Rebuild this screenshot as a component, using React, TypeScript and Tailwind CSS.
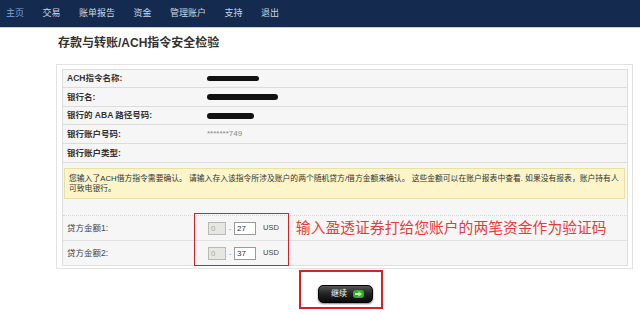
import React from "react";

const FONT = "font-['Liberation_Sans','Noto_Sans_CJK_SC',sans-serif]";

function Bar({ w, h = 4 }: { w: number; h?: number }) {
  return <div className="rounded-full bg-[#111]" style={{ width: w, height: h }} />;
}

export default function App() {
  const nav = ["主页", "交易", "账单报告", "资金", "管理账户", "支持", "退出"];
  return (
    <div className={`w-[640px] h-[315px] bg-white overflow-hidden ${FONT}`}>
      <div className="h-[28px] bg-[#142a4f] border-b border-[#c5d0de] flex items-center pl-[6px] gap-[18.5px] text-[9px]">
        {nav.map((n, i) => (
          <span key={n} className={i === 0 ? "text-[#7ea3d6]" : "text-[#cfd4dd]"}>
            {n}
          </span>
        ))}
      </div>
      <div className="pl-[56px] pr-[7px]">
        <div className="pt-[7px] pl-[2px] h-[36px] text-[12px] leading-[16px] font-bold text-[#333]">
          存款与转账/ACH指令安全检验
        </div>
        <div className="border border-[#e2e2e2] pt-[4px] pb-[2px] pl-[5px] pr-[4px]">
          <div className="border border-[#dedede] bg-[#f6f6f6]">
            {[
              { label: "ACH指令名称:", h: "h-[18px]", v: <Bar w={52} h={5} /> },
              { label: "银行名:", h: "h-[19px]", v: <Bar w={71} h={6} /> },
              { label: "银行的 ABA 路径号码:", h: "h-[18px]", v: <Bar w={47} h={6} /> },
              {
                label: "银行账户号码:",
                h: "h-[19px]",
                v: <span className="text-[8px] text-[#888]">*******749</span>,
              },
              { label: "银行账户类型:", h: "h-[19px]", v: null },
            ].map((r) => (
              <div key={r.label} className={`${r.h} border-b border-[#dcdcdc] flex items-center`}>
                <div className="w-[144px] pl-[4px] text-[8.5px] font-bold text-[#333]">{r.label}</div>
                <div className="flex items-center">{r.v}</div>
              </div>
            ))}
            <div className="h-[53px] border-b border-dotted border-[#d6d6d6] pt-[5px] pl-[1px] pr-[2px]">
              <div className="h-[31px] bg-[#fbf5c9] border border-[#e9e0a8] pl-[4px] pt-[5px] text-[7.8px] leading-[10px] text-[#333] whitespace-nowrap overflow-hidden">
                您输入了ACH借方指令需要确认。 请输入存入该指令所涉及账户的两个随机贷方/借方金额来确认。 这些金额可以在账户报表中查看. 如果没有报表，账户持有人
                <br />
                可致电银行。
              </div>
            </div>
            <div className="relative">
              <div className="h-[25px] border-b border-[#e2e2e2] flex items-center">
                <div className="w-[145px] pl-[4px] text-[8.5px] text-[#444]">贷方金额1:</div>
                <Inputs a="0" b="27" />
                <span className="ml-[17px] text-[14.8px] leading-[16px] text-[#e43d3a]">
                  输入盈透证券打给您账户的两笔资金作为验证码
                </span>
              </div>
              <div className="h-[24px] flex items-center">
                <div className="w-[145px] pl-[4px] text-[8.5px] text-[#444]">贷方金额2:</div>
                <Inputs a="0" b="37" />
              </div>
              <div className="absolute left-[131px] top-[-3px] w-[95px] h-[53px] border-[1.5px] border-[#d3202b]" />
            </div>
          </div>
        </div>
        <div className="ml-[243px] mt-[1px] w-[84px] h-[39px] border-2 border-[#d3202b] pt-[13px] pl-[17px]">
          <div className="w-[55px] h-[18px] rounded-[5px] border border-[#000] bg-gradient-to-b from-[#555] via-[#222] to-[#0a0a0a] shadow-[0_1px_2px_rgba(0,0,0,0.5)] flex items-center pl-[12px] gap-[6px]">
            <span className="text-[8px] leading-[10px] text-white">继续</span>
            <svg width="11" height="8" viewBox="0 0 11 8">
              <rect x="0" y="0" width="11" height="8" rx="3" fill="#3da82f" />
              <path d="M2 3h3.5V1.3L9 4 5.5 6.7V5H2z" fill="#b8f5a8" />
            </svg>
          </div>
        </div>
      </div>
    </div>
  );
}

function Inputs({ a, b }: { a: string; b: string }) {
  return (
    <div className="flex items-center">
      <div className="w-[18px] h-[13px] bg-[#e6e7e0] border border-[#b8b8b8] text-[8px] leading-[11px] pl-[2px] text-[#aaa]">
        {a}
      </div>
      <span className="w-[8px] text-center text-[8px] text-[#555]">.</span>
      <div className="w-[22px] h-[13px] bg-white border border-[#9a9a9a] text-[8px] leading-[11px] pl-[2px] text-[#333]">
        {b}
      </div>
      <span className="ml-[7px] text-[7.5px] text-[#444]">USD</span>
    </div>
  );
}
